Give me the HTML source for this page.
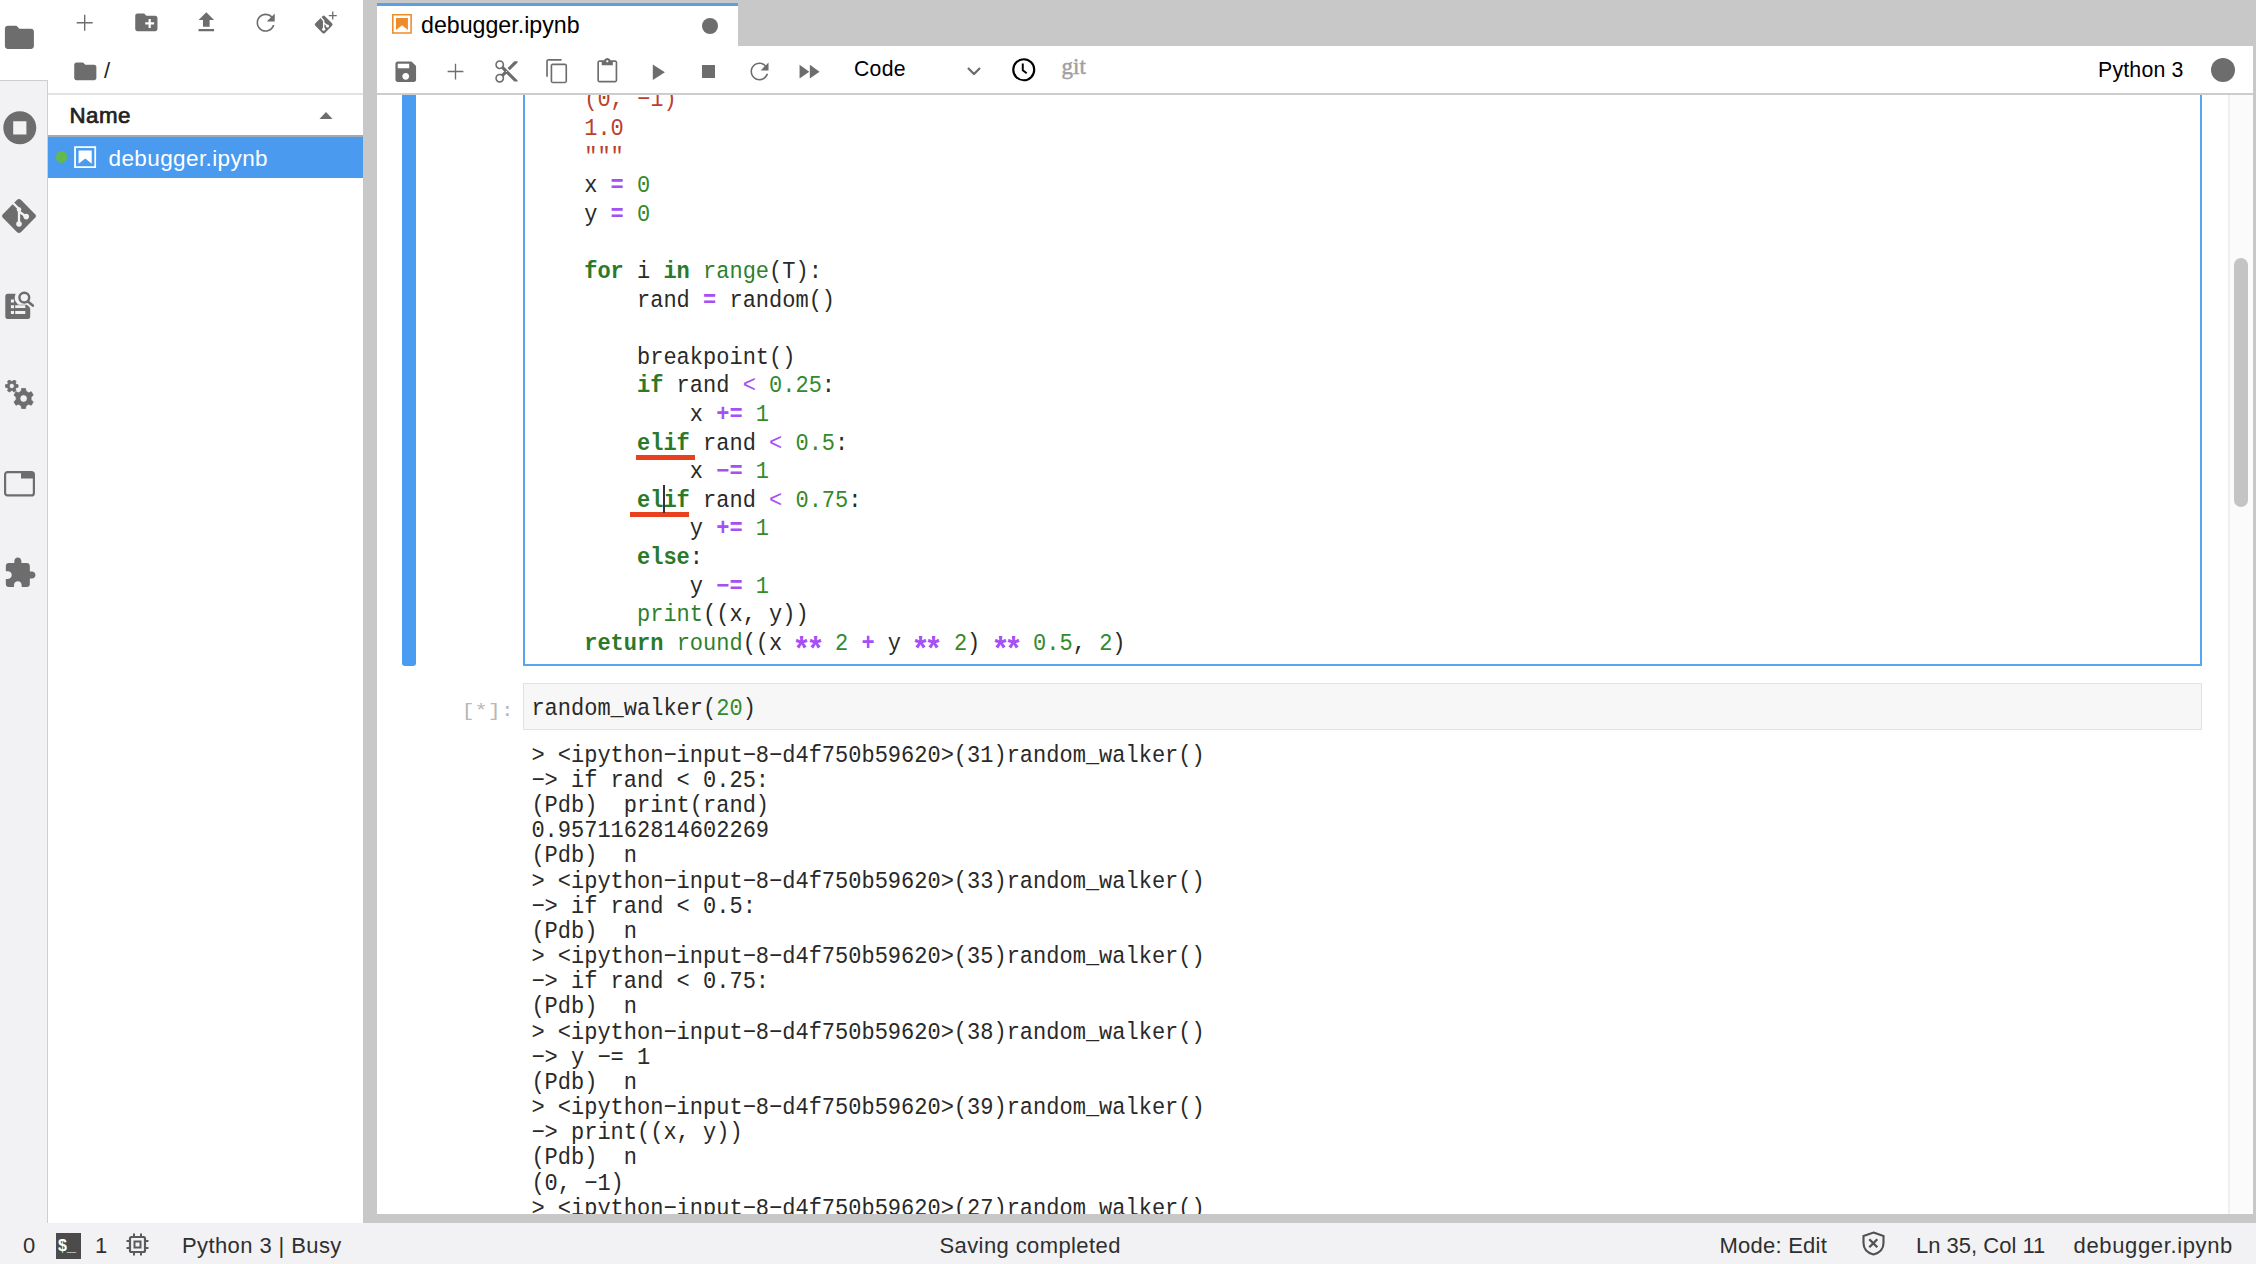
<!DOCTYPE html>
<html><head><meta charset="utf-8">
<style>
*{box-sizing:border-box;margin:0;padding:0}
html,body{width:2256px;height:1264px;overflow:hidden;background:#c8c8c8;font-family:"Liberation Sans",sans-serif;color:#212121}
.a{position:absolute}
.mono{font-family:"Liberation Mono",monospace}
#act{left:0;top:0;width:48px;height:1223px;background:#f2f2f4;border-right:1px solid #cfcfcf}
#actsel{left:0;top:0;width:48px;height:81px;background:#fff;border-bottom:1px solid #cfcfcf}
#fb{left:48px;top:0;width:315px;height:1223px;background:#fff}
#status{left:0;top:1223px;width:2256px;height:41px;background:#f2f2f4}
#tabbar{left:377px;top:0;width:1879px;height:45px;background:#c8c8c8}
#tab{left:377px;top:3px;width:361px;height:43px;background:#fff;border-top:3px solid #5aa0e3}
#nb{left:377px;top:45px;width:1876px;height:1169px;background:#fff;overflow:hidden}
#tb{left:0;top:0;width:1876px;height:50px;border-bottom:2px solid #cdcdcd;background:#fff;z-index:5}
.ic{position:absolute;fill:#6d6d6d}
.code{position:absolute;left:533.6px;font-family:"Liberation Mono",monospace;font-size:22px;color:#292929}
.cl,.ol{white-space:pre}
.cl{transform:scaleY(1.07);transform-origin:0 20.17px}
.ol{transform:scaleY(1.07);transform-origin:0 18.45px}
.cl{height:28.62px;line-height:28.62px}
.ol{height:25.18px;line-height:25.18px}
.k{color:#2a7a2a;font-weight:bold}
.b{color:#2f7f2f}
.n{color:#348a2c}
.o{color:#a64ff5}
.ob{font-weight:bold}
.ast{display:inline-block;transform:translateY(6px) scale(1.4,1.4);transform-origin:50% 35%}
.s{color:#b8402e}
</style></head><body>
<div id="act" class="a"></div>
<div id="actsel" class="a"></div>
<div id="fb" class="a"></div>
<!-- activity bar icons -->
<svg class="ic" style="left:2.1px;top:20.2px" width="34.8" height="34.8" viewBox="0 0 24 24"><path d="M10 4H4c-1.1 0-1.99.9-1.99 2L2 18c0 1.1.9 2 2 2h16c1.1 0 2-.9 2-2V8c0-1.1-.9-2-2-2h-8l-2-2z"/></svg>
<svg class="ic" style="left:-0.3px;top:107.5px" width="39.6" height="39.6" viewBox="0 0 24 24"><path d="M12 2C6.48 2 2 6.48 2 12s4.48 10 10 10 10-4.48 10-10S17.52 2 12 2zm4 14H8V8h8v8z" fill-rule="evenodd"/></svg>
<svg class="ic" style="left:1.8px;top:199px" width="34" height="34" viewBox="0 0 34 34"><rect x="4.25" y="4.25" width="25.5" height="25.5" rx="3" transform="rotate(45 17 17)"/><path d="M10.5 3.5 L17 10 L17 25 M17 12.5 L24 17.5" stroke="#f2f2f4" stroke-width="2.3" fill="none"/><circle cx="17" cy="10.5" r="2.3" fill="#f2f2f4"/><circle cx="17" cy="25" r="2.8" fill="#f2f2f4"/><circle cx="24.2" cy="17.6" r="2.8" fill="#f2f2f4"/></svg>
<svg class="ic" style="left:0;top:280px" width="40" height="45" viewBox="0 0 40 45"><path d="M5.3 16.3 Q5.3 13.8 7.8 13.8 H15.6 A9.5 9.5 0 0 0 18.3 24.8 H25.5 Q27.2 24.8 28.4 25.9 L29.4 26.9 Q30.2 27.8 30.2 29.2 V36.4 Q30.2 38.9 27.7 38.9 H7.8 Q5.3 38.9 5.3 36.4 Z"/><path d="M10.9 19.4h3.1v3H10.9zM10.9 25.3h3.1v3H10.9zM10.9 31.05h3.1v3H10.9zM15.2 31.05h10.1v3H15.2zM15.2 25.3h10.1v2.6H15.2z" fill="#f2f2f4"/><circle cx="24.3" cy="17.6" r="4.9" fill="none" stroke="#6d6d6d" stroke-width="2.4"/><path d="M27.9 21.4 L32.8 25.6" stroke="#6d6d6d" stroke-width="2.6" stroke-linecap="round"/></svg>
<svg class="ic" style="left:0;top:380px" width="40" height="32" viewBox="0 0 40 32"><path d="M16.09 7.65 L18.06 7.33 L18.06 4.67 L16.09 4.35 L15.37 3.11 L16.08 1.24 L13.78 -0.09 L12.52 1.46 L11.08 1.46 L9.82 -0.09 L7.52 1.24 L8.23 3.11 L7.51 4.35 L5.54 4.67 L5.54 7.33 L7.51 7.65 L8.23 8.89 L7.52 10.76 L9.82 12.09 L11.08 10.54 L12.52 10.54 L13.78 12.09 L16.08 10.76 L15.37 8.89Z M11.8 3.5 a2.5 2.5 0 1 0 0.01 0Z" fill-rule="evenodd" stroke="#6d6d6d" stroke-width="0.8" stroke-linejoin="round"/><path d="M26.07 11.31 L25.55 8.49 L21.65 8.49 L21.13 11.31 L18.61 12.76 L15.90 11.81 L13.96 15.18 L16.14 17.05 L16.14 19.95 L13.96 21.82 L15.90 25.19 L18.61 24.24 L21.13 25.69 L21.65 28.51 L25.55 28.51 L26.07 25.69 L28.59 24.24 L31.30 25.19 L33.24 21.82 L31.06 19.95 L31.06 17.05 L33.24 15.18 L31.30 11.81 L28.59 12.76Z M23.6 14.8 a3.7 3.7 0 1 0 0.01 0Z" fill-rule="evenodd" stroke="#6d6d6d" stroke-width="0.8" stroke-linejoin="round"/></svg>
<svg class="ic" style="left:4.2px;top:471px" width="31" height="25.5" viewBox="0 0 31 25.5"><rect x="1.1" y="1.1" width="28.8" height="23.3" rx="2.5" fill="none" stroke="#6d6d6d" stroke-width="2.2"/><rect x="17" y="1" width="13" height="6.5"/></svg>
<svg class="ic" style="left:2.5px;top:556px" width="33.9" height="33.9" viewBox="0 0 24 24"><path d="M20.5 11H19V7c0-1.1-.9-2-2-2h-4V3.5C13 2.12 11.88 1 10.5 1S8 2.12 8 3.5V5H4c-1.1 0-1.99.9-1.99 2v3.8H3.5c1.49 0 2.7 1.21 2.7 2.7s-1.21 2.7-2.7 2.7H2V20c0 1.1.9 2 2 2h3.8v-1.5c0-1.49 1.21-2.7 2.7-2.7 1.490 0 2.7 1.21 2.7 2.7V22H17c1.1 0 2-.9 2-2v-4h1.5c1.38 0 2.5-1.12 2.5-2.5S21.88 11 20.5 11z"/></svg>
<!-- file browser toolbar -->
<svg class="ic" style="left:71.3px;top:9.3px" width="27.4" height="27.4" viewBox="0 0 24 24"><path d="M19 12.6h-6.4v6.4h-1.2v-6.4H5v-1.2h6.4V5h1.2v6.4H19z"/></svg>
<svg class="ic" style="left:132.8px;top:9.05px" width="26.7" height="26.7" viewBox="0 0 24 24"><path d="M20 6h-8l-2-2H4c-1.11 0-1.99.89-1.990 2L2 18c0 1.11.89 2 2 2h16c1.11 0 2-.89 2-2V8c0-1.11-.89-2-2-2zm-1 8h-3v3h-2v-3h-3v-2h3V9h2v3h3v2z"/></svg>
<svg class="ic" style="left:193.3px;top:9.45px" width="26.6" height="26.6" viewBox="0 0 24 24"><path d="M9 16h6v-6h4l-7-7-7 7h4zm-4 2h14v2H5z"/></svg>
<svg class="ic" style="left:252.2px;top:8.95px" width="27.3" height="27.3" viewBox="0 0 24 24"><path d="M17.65 6.35C16.2 4.9 14.21 4 12 4c-4.42 0-7.99 3.58-7.99 8s3.57 8 7.99 8c3.73 0 6.84-2.55 7.73-6h-1.5c-.82 2.6-3.3 4.6-6.23 4.6-3.6 0-6.6-2.9-6.6-6.6s2.9-6.6 6.6-6.6c1.8 0 3.4.7 4.6 1.9L13 11h7V4l-2.35 2.35z"/></svg>
<svg class="ic" style="left:314px;top:11px" width="24" height="24" viewBox="0 0 24 24"><rect x="2.90" y="6.80" width="13.6" height="13.6" rx="1.8" transform="rotate(45 9.70 13.60)"/><path d="M6.10 5.40 L9.70 9.80 L9.70 18.10 M9.70 11.80 L13.30 14.80" stroke="#fff" stroke-width="1.4" fill="none"/><circle cx="9.70" cy="18.20" r="1.6" fill="#fff"/><circle cx="13.50" cy="15.00" r="1.6" fill="#fff"/><path d="M18.75 0.6v8M14.75 4.6h8" stroke="#6d6d6d" stroke-width="1.3"/></svg>
<svg class="ic" style="left:71.8px;top:57.6px" width="26.6" height="26.6" viewBox="0 0 24 24"><path d="M10 4H4c-1.1 0-1.99.9-1.99 2L2 18c0 1.1.9 2 2 2h16c1.1 0 2-.9 2-2V8c0-1.1-.9-2-2-2h-8l-2-2z"/></svg>
<div class="a" style="left:104px;top:58px;font-size:22px;line-height:26px;color:#212121">/</div>
<div class="a" style="left:48px;top:93px;width:315px;height:1.5px;background:#e3e3e3"></div>
<div class="a" style="left:69.5px;top:100.5px;font-size:22.3px;line-height:30px;color:#222;-webkit-text-stroke:0.7px #222;letter-spacing:0.5px">Name</div>
<svg class="ic" style="left:319px;top:111.5px" width="14" height="7.5" viewBox="0 0 14 7.5"><path d="M0 7.5L7 0l7 7.5z"/></svg>
<div class="a" style="left:48px;top:135px;width:315px;height:42.5px;background:#4a9bf0;border-top:2px solid #9eabb8"></div>
<div class="a" style="left:55.6px;top:151.3px;width:11.4px;height:11.6px;border-radius:50%;background:#63b94b"></div>
<svg class="a" style="left:71.85px;top:143.75px" width="26.3" height="26.3" viewBox="0 0 22 22"><g fill="#fff"><path d="M18.7 3.3v15.4H3.3V3.3h15.4m1.5-1.5H1.8v18.3h18.3l.1-18.3z"/><path d="M16.5 16.5l-5.4-4.3-5.6 4.3v-11h11z"/></g></svg>
<div class="a" style="left:108.5px;top:144.5px;font-size:22.5px;line-height:28px;color:#fff;letter-spacing:0.4px">debugger.ipynb</div>

<div id="tabbar" class="a"></div>
<div id="tab" class="a"></div>
<!-- tab -->
<svg class="a" style="left:390px;top:12px" width="23.9" height="23.9" viewBox="0 0 22 22"><g fill="#ef8c2a"><path d="M18.7 3.3v15.4H3.3V3.3h15.4m1.5-1.5H1.8v18.3h18.3l.1-18.3z"/><path d="M16.5 16.5l-5.4-4.3-5.6 4.3v-11h11z"/></g></svg>
<div class="a" style="left:421px;top:11px;font-size:23.2px;line-height:28px;color:#000">debugger.ipynb</div>
<div class="a" style="left:702px;top:18px;width:16px;height:16px;border-radius:50%;background:#6d6d6d"></div>

<div id="nb" class="a">
  <div id="tb" class="a">
  <div class="a" style="left:361px;top:0;width:1515px;height:1px;background:#c8c8c8"></div>
  <!-- notebook toolbar: coordinates relative to #nb (377,45) -->
  <svg class="ic" style="left:14.9px;top:12.5px" width="27.5" height="27.5" viewBox="0 0 24 24"><path d="M17 3H5c-1.11 0-2 .9-2 2v14c0 1.1.89 2 2 2h14c1.1 0 2-.9 2-2V7l-4-4zm-5 16c-1.66 0-3-1.34-3-3s1.34-3 3-3 3 1.34 3 3-1.34 3-3 3zm3-10H5V5h10v4z"/></svg>
  <svg class="ic" style="left:65.1px;top:12.5px" width="27" height="27" viewBox="0 0 24 24"><path d="M19 12.6h-6.4v6.4h-1.2v-6.4H5v-1.2h6.4V5h1.2v6.4H19z"/></svg>
  <svg class="ic" style="left:116px;top:13px" width="26.9" height="26.9" viewBox="0 0 24 24"><path d="M9.64 7.64c.23-.5.36-1.05.36-1.64 0-2.21-1.79-4-4-4S2 3.79 2 6s1.79 4 4 4c.59 0 1.14-.13 1.64-.36L10 12l-2.36 2.36C7.14 14.13 6.59 14 6 14c-2.21 0-4 1.790-4 4s1.79 4 4 4 4-1.79 4-4c0-.59-.13-1.14-.36-1.64L12 14l7 7h3v-1L9.64 7.64zM6 8.6c-1.4 0-2.6-1.2-2.6-2.6s1.2-2.6 2.6-2.6 2.6 1.2 2.6 2.6-1.2 2.6-2.6 2.6zm0 12c-1.4 0-2.6-1.2-2.6-2.6s1.2-2.6 2.6-2.6 2.6 1.2 2.6 2.6-1.2 2.6-2.6 2.6zm6-8.1c-.28 0-.5-.22-.5-.5s.22-.5.5-.5.5.22.5.5-.22.5-.5.5zM19 3l-6 6 2 2 7-7V3z"/></svg>
  <svg class="ic" style="left:166.5px;top:13.4px" width="26.4" height="26.4" viewBox="0 0 24 24"><path d="M16 1H4c-1.1 0-2 .9-2 2v14h1.5V2.5H16V1zm3 4H8c-1.1 0-2 .9-2 2v14c0 1.1.9 2 2 2h11c1.1 0 2-.9 2-2V7c0-1.1-.9-2-2-2zm0.5 16.5H7.5V6.5h12v15z"/></svg>
  <svg class="ic" style="left:216.7px;top:13px" width="26.6" height="26.6" viewBox="0 0 24 24"><path d="M19 2h-4.18C14.4.84 13.3 0 12 0c-1.3 0-2.4.84-2.82 2H5c-1.1 0-2 .9-2 2v16c0 1.1.9 2 2 2h14c1.1 0 2-.9 2-2V4c0-1.1-.9-2-2-2zm-7 0c.55 0 1 .45 1 1s-.45 1-1 1-1-.45-1-1 .45-1 1-1zm7.5 18.5H4.5V3.5H7v3h10v-3h2.5v17z"/></svg>
  <svg class="ic" style="left:267.2px;top:13.6px" width="26.4" height="26.4" viewBox="0 0 24 24"><path d="M8 5v14l11-7z"/></svg>
  <svg class="ic" style="left:325px;top:20px" width="13" height="13" viewBox="0 0 13 13"><path d="M0 0h13v13H0z"/></svg>
  <svg class="ic" style="left:368.9px;top:13.2px" width="27" height="27" viewBox="0 0 24 24"><path d="M17.65 6.35C16.2 4.9 14.21 4 12 4c-4.42 0-7.99 3.58-7.99 8s3.57 8 7.99 8c3.73 0 6.84-2.55 7.730-6h-1.6c-.82 2.6-3.3 4.6-6.13 4.6-3.6 0-6.6-2.9-6.6-6.6s2.9-6.6 6.6-6.6c1.8 0 3.4.7 4.6 1.9L13 11h7V4l-2.35 2.35z"/></svg>
  <svg class="ic" style="left:418.4px;top:13.1px" width="27.4" height="27.4" viewBox="0 0 24 24"><path d="M4 18l8.5-6L4 6v12zm9-12v12l8.5-6L13 6z"/></svg>
  <div class="a" style="left:477px;top:10px;font-size:21.2px;line-height:28px;color:#000;letter-spacing:0.3px">Code</div>
  <svg class="a" style="left:589.5px;top:22px" width="14" height="8" viewBox="0 0 14 8"><path d="M1 1l6 6 6-6" stroke="#6a6a6a" stroke-width="2.2" fill="none"/></svg>
  <svg class="a" style="left:635px;top:13px" width="23.5" height="23.5" viewBox="0 0 24 24"><circle cx="12" cy="12" r="10.7" fill="none" stroke="#000" stroke-width="2.2"/><path d="M11 5.5v7l4 3" stroke="#000" stroke-width="2" fill="none"/></svg>
  <div class="a" style="left:684.5px;top:8px;font-family:'Liberation Serif',serif;font-size:23px;line-height:28px;color:#a0a0a0;-webkit-text-stroke:0.5px #a0a0a0">git</div>
  <div class="a" style="left:1721px;top:11px;font-size:21.3px;line-height:28px;color:#000;letter-spacing:0.2px">Python 3</div>
  <div class="a" style="left:1834px;top:12.5px;width:24px;height:24px;border-radius:50%;background:#6d6d6d"></div>

</div>
</div>

<div id="content" class="a" style="left:377px;top:94px;width:1876px;height:1120px;overflow:hidden">
  <div class="a" style="left:25px;top:-20px;width:14px;height:592px;background:#4a9cf2;border-radius:0 0 3px 3px"></div>
  <div class="a" style="left:146px;top:-30px;width:1679px;height:602px;border:2px solid #5aa5f0;background:#fff"></div>
  <div class="code" style="left:154.4px;top:-6.68px">
<div class="cl">    <span class="s">(0, −1)</span></div>
<div class="cl">    <span class="s">1.0</span></div>
<div class="cl">    <span class="s">&quot;&quot;&quot;</span></div>
<div class="cl">    x <span class="o ob">=</span> <span class="n">0</span></div>
<div class="cl">    y <span class="o ob">=</span> <span class="n">0</span></div>
<div class="cl"></div>
<div class="cl">    <span class="k">for</span> i <span class="k">in</span> <span class="b">range</span>(T):</div>
<div class="cl">        rand <span class="o ob">=</span> random()</div>
<div class="cl"></div>
<div class="cl">        breakpoint()</div>
<div class="cl">        <span class="k">if</span> rand <span class="o">&lt;</span> <span class="n">0.25</span>:</div>
<div class="cl">            x <span class="o ob">+=</span> <span class="n">1</span></div>
<div class="cl">        <span class="k">elif</span> rand <span class="o">&lt;</span> <span class="n">0.5</span>:</div>
<div class="cl">            x <span class="o ob">−=</span> <span class="n">1</span></div>
<div class="cl">        <span class="k">elif</span> rand <span class="o">&lt;</span> <span class="n">0.75</span>:</div>
<div class="cl">            y <span class="o ob">+=</span> <span class="n">1</span></div>
<div class="cl">        <span class="k">else</span>:</div>
<div class="cl">            y <span class="o ob">−=</span> <span class="n">1</span></div>
<div class="cl">        <span class="b">print</span>((x, y))</div>
<div class="cl">    <span class="k">return</span> <span class="b">round</span>((x <span class="o ob"><span class="ast">*</span><span class="ast">*</span></span> <span class="n">2</span> <span class="o ob">+</span> y <span class="o ob"><span class="ast">*</span><span class="ast">*</span></span> <span class="n">2</span>) <span class="o ob"><span class="ast">*</span><span class="ast">*</span></span> <span class="n">0.5</span>, <span class="n">2</span>)</div>
  </div>
  <div class="a" style="left:259.1px;top:361px;width:58.6px;height:5px;background:#e9401e"></div>
  <div class="a" style="left:253.3px;top:418.4px;width:58.3px;height:5px;background:#e9401e"></div>
  <div class="a" style="left:286px;top:390.5px;width:1.6px;height:28px;background:#333"></div>
  <div class="a mono" style="left:84.5px;top:601.5px;font-size:21.83px;line-height:28px;color:#b8b8b8;white-space:pre;transform:scaleY(0.82);transform-origin:0 23px">[*]:</div>
  <div class="a" style="left:146px;top:589px;width:1679px;height:47px;border:1.5px solid #e2e2e2;background:#f7f7f7"></div>
  <div class="code" style="left:154.4px;top:602px"><div class="cl">random_walker(<span class="n">20</span>)</div></div>
  <div class="code" style="left:154.4px;top:649.7px">
<div class="ol">&gt; &lt;ipython−input−8−d4f750b59620&gt;(31)random_walker()</div>
<div class="ol">−&gt; if rand &lt; 0.25:</div>
<div class="ol">(Pdb)  print(rand)</div>
<div class="ol">0.9571162814602269</div>
<div class="ol">(Pdb)  n</div>
<div class="ol">&gt; &lt;ipython−input−8−d4f750b59620&gt;(33)random_walker()</div>
<div class="ol">−&gt; if rand &lt; 0.5:</div>
<div class="ol">(Pdb)  n</div>
<div class="ol">&gt; &lt;ipython−input−8−d4f750b59620&gt;(35)random_walker()</div>
<div class="ol">−&gt; if rand &lt; 0.75:</div>
<div class="ol">(Pdb)  n</div>
<div class="ol">&gt; &lt;ipython−input−8−d4f750b59620&gt;(38)random_walker()</div>
<div class="ol">−&gt; y −= 1</div>
<div class="ol">(Pdb)  n</div>
<div class="ol">&gt; &lt;ipython−input−8−d4f750b59620&gt;(39)random_walker()</div>
<div class="ol">−&gt; print((x, y))</div>
<div class="ol">(Pdb)  n</div>
<div class="ol">(0, −1)</div>
<div class="ol">&gt; &lt;ipython−input−8−d4f750b59620&gt;(27)random_walker()</div>
  </div>
  <div class="a" style="left:1851px;top:0;width:25px;height:1120px;background:#fbfbfb;border-left:2px solid #efefef"></div>
  <div class="a" style="left:1857px;top:164px;width:14px;height:249px;border-radius:7px;background:#c4c4c4"></div>
</div>
<div id="status" class="a"></div>
<div class="a" style="left:23px;top:1231.4px;font-size:22px;line-height:30px;color:#2f2f2f">0</div>
<div class="a" style="left:56px;top:1233px;width:25px;height:25.5px;background:#4b4b4b"></div>
<div class="a" style="left:58px;top:1234px;font-size:16px;line-height:24px;color:#fff;font-weight:bold">$_</div>
<div class="a" style="left:95px;top:1231.4px;font-size:22px;line-height:30px;color:#2f2f2f">1</div>
<svg class="a" style="left:125px;top:1232px" width="25" height="25" viewBox="0 0 25 25"><rect x="5" y="5" width="15" height="15" rx="1.5" fill="none" stroke="#5a5a5a" stroke-width="2.2"/><rect x="9.5" y="9.5" width="6" height="6" fill="none" stroke="#5a5a5a" stroke-width="2"/><path d="M9 1.5v3.5M16 1.5v3.5M9 20v3.5M16 20v3.5M1.5 9h3.5M1.5 16h3.5M20 9h3.5M20 16h3.5" stroke="#5a5a5a" stroke-width="2"/></svg>
<div class="a" style="left:182px;top:1231.4px;font-size:22px;line-height:30px;color:#2f2f2f;letter-spacing:0.4px;white-space:pre">Python 3 | Busy</div>
<div class="a" style="left:939.5px;top:1231.4px;font-size:22px;line-height:30px;color:#2f2f2f;letter-spacing:0.4px;white-space:pre">Saving completed</div>
<div class="a" style="left:1719.5px;top:1231.4px;font-size:22px;line-height:30px;color:#2f2f2f;letter-spacing:0.24px;white-space:pre">Mode: Edit</div>
<svg class="a" style="left:1860.5px;top:1231px" width="25" height="25" viewBox="0 0 25 25"><path d="M12.5 1.5 L22.5 5 V12 C22.5 18 18 22 12.5 23.5 C7 22 2.5 18 2.5 12 V5 Z" fill="none" stroke="#505050" stroke-width="2.1"/><path d="M8.3 8.3l8 8M16.3 8.3l-8 8" stroke="#505050" stroke-width="2.3"/></svg>
<div class="a" style="left:1916px;top:1231.4px;font-size:22px;line-height:30px;color:#2f2f2f;white-space:pre">Ln 35, Col 11</div>
<div class="a" style="left:2073.5px;top:1231.4px;font-size:22px;line-height:30px;color:#2f2f2f;letter-spacing:0.64px;white-space:pre">debugger.ipynb</div>

</body></html>
